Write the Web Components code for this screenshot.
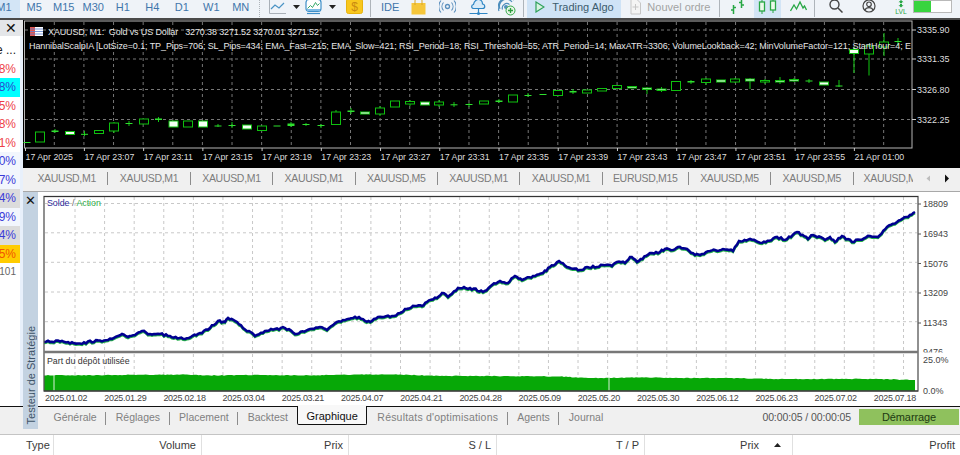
<!DOCTYPE html>
<html lang="fr">
<head>
<meta charset="utf-8">
<title>Testeur de Stratégie</title>
<style>
  html, body { margin: 0; height: 100%; overflow: hidden; background: #fff; }
  body { width: 960px; height: 455px; font-family: "Liberation Sans", Arial, sans-serif; }
  .main { display: flex; height: 414px; }
  .right { flex: 1; min-width: 0; display: flex; flex-direction: column; }
</style>
</head>
<body>
<mt-toolbar>
  <tf-button active>M1</tf-button><tf-button>M5</tf-button><tf-button>M15</tf-button><tf-button>M30</tf-button><tf-button>H1</tf-button><tf-button>H4</tf-button><tf-button>D1</tf-button><tf-button>W1</tf-button><tf-button>MN</tf-button>
  <tb-sep dashed ml="3.5" mr="8"></tb-sep>
  <tb-icon name="line" w="18" gap="7"></tb-icon><tb-icon name="caret" w="7" gap="5"></tb-icon>
  <tb-icon name="monitor" w="17" gap="7"></tb-icon><tb-icon name="caret" w="7" gap="10"></tb-icon>
  <tb-icon name="dollar" w="17" gap="5"></tb-icon>
  <tb-sep ml="2" mr="3"></tb-sep>
  <tb-label gap="7" after="12">IDE</tb-label>
  <tb-icon name="bag" w="15" gap="13"></tb-icon>
  <tb-icon name="signal" w="17" gap="13"></tb-icon>
  <tb-icon name="cloud" w="19" gap="10"></tb-icon>
  <tb-icon name="radar" w="18" gap="5"></tb-icon>
  <tb-sep ml="2" mr="3"></tb-sep>
  <algo-button>Trading Algo</algo-button>
  <tb-icon name="doc" w="11"></tb-icon>
  <tb-label gap="6" after="7" muted>Nouvel ordre</tb-label>
  <tb-sep ml="2" mr="9"></tb-sep>
  <tb-icon name="bars" w="16" gap="9"></tb-icon>
  <tb-icon name="candles" w="27" gap="9" active></tb-icon>
  <tb-icon name="zigzag" w="17" gap="5"></tb-icon>
  <tb-sep ml="2" mr="14"></tb-sep>
  <tb-icon name="search" w="14" gap="19"></tb-icon>
  <tb-icon name="user" w="14" gap="18"></tb-icon>
  <tb-icon name="lvl" w="14" gap="5"></tb-icon>
  <tb-icon name="meter" w="39"></tb-icon>
</mt-toolbar>

<div class="main">
  <market-strip>
    <watch-row>e ...</watch-row>
    <watch-row color="#ee3f48">98%</watch-row>
    <watch-row color="#2a49d0" bg="#00ffff">28%</watch-row>
    <watch-row color="#ee3f48">15%</watch-row>
    <watch-row color="#ee3f48">78%</watch-row>
    <watch-row color="#ee3f48">01%</watch-row>
    <watch-row color="#3a3ad8" bg="#f2f6fd">10%</watch-row>
    <watch-row color="#3a3ad8" bg="#f2f6fd">07%</watch-row>
    <watch-row color="#3a3ad8" bg="#dcdcdc">14%</watch-row>
    <watch-row color="#3a3ad8" bg="#f2f6fd">39%</watch-row>
    <watch-row color="#3a3ad8" bg="#dcdcdc">14%</watch-row>
    <watch-row color="#f25400" bg="#ffcc00">55%</watch-row>
    <watch-row color="#666" style="font-size:10px">101</watch-row>
  </market-strip>
  <div class="right">
    <price-chart></price-chart>
    <chart-tabs>
      <chart-tab>XAUUSD,M1</chart-tab><chart-tab>XAUUSD,M1</chart-tab><chart-tab>XAUUSD,M1</chart-tab><chart-tab>XAUUSD,M1</chart-tab><chart-tab>XAUUSD,M5</chart-tab><chart-tab>XAUUSD,M1</chart-tab><chart-tab>XAUUSD,M1</chart-tab><chart-tab w="86">EURUSD,M15</chart-tab><chart-tab>XAUUSD,M5</chart-tab><chart-tab>XAUUSD,M5</chart-tab><chart-tab last>XAUUSD,M1</chart-tab>
    </chart-tabs>
    <tester-panel>
      <equity-chart></equity-chart>
      <tester-tabs>
        <tester-tab>Générale</tester-tab>
        <tester-tab>Réglages</tester-tab>
        <tester-tab>Placement</tester-tab>
        <tester-tab plain>Backtest</tester-tab>
        <tester-tab active>Graphique</tester-tab>
        <tester-tab style="letter-spacing:.2px">Résultats d'optimisations</tester-tab>
        <tester-tab>Agents</tester-tab>
        <tester-tab plain>Journal</tester-tab>
      </tester-tabs>
    </tester-panel>
  </div>
</div>

<positions-header>
  <col-head w="54" left>Type</col-head>
  <col-head w="148">Volume</col-head>
  <col-head w="147">Prix</col-head>
  <col-head w="148">S / L</col-head>
  <col-head w="148">T / P</col-head>
  <col-head w="148" pad="33" sort>Prix</col-head>
  <col-head w="167" last>Profit</col-head>
</positions-header>

<script>
const ICONS = {
  line: `<path d="M1.5 2V15.5H18" fill="none" stroke="#a9b0b8"/><path d="M3 11l4-4 4 3 5-5" fill="none" stroke="#4a93c4" stroke-width="1.2"/>`,
  caret: `<path d="M0 7h7l-3.5 4z" fill="#222"/>`,
  monitor: `<rect x="1" y="1.5" width="15" height="12" rx="3" fill="#fff" stroke="#3f8fc8" stroke-width="1.2"/><path d="M2.5 10.5l3-3 2 2 3-5 2 3 2-2" fill="none" stroke="#35a86a"/><path d="M2 11h13v2H2z" fill="#7fbce6"/><path d="M2 15.5h13" stroke="#3f8fc8" stroke-width="1.2"/>`,
  dollar: `<rect x="0.5" y="1" width="16" height="14.5" rx="2" fill="#f8c71e" stroke="#e7b30e"/><text x="8.5" y="12.5" font-size="12" text-anchor="middle" fill="#c98a12" font-family="Liberation Sans">$</text>`,
  bag: `<path d="M0.5 5h14v11.5H0.5z" fill="#f5c63a"/><path d="M4 7V2.5C4 .5 11 .5 11 2.5V7" fill="none" stroke="#d9a526"/>`,
  signal: `<circle cx="8.5" cy="8.5" r="2" fill="none" stroke="#5b8fbd" stroke-width="1.3"/><path d="M4.5 4.5a6 6 0 0 0 0 8M12.5 4.5a6 6 0 0 1 0 8M2 2.5a9 9 0 0 0 0 12M15 2.5a9 9 0 0 1 0 12" fill="none" stroke="#5b8fbd" stroke-width="1.1"/>`,
  cloud: `<path d="M5 10.5C2 10.5 2 7 4.5 6.5 5 3 8 1 10 1.5c2.5 .5 3.5 2.5 3.5 4.5 3 .5 3 4.5 0 4.5z" fill="#d9ebf8" stroke="#2f86c4" stroke-width="1.2"/><path d="M9.5 10.5v5M.5 15.5h18" stroke="#2f86c4" stroke-width="1.2"/><circle cx="9.5" cy="15.5" r="1.5" fill="#2f86c4"/>`,
  radar: `<path d="M2 11a7 7 0 0 1 12-7M4.5 11.5a4.5 4.5 0 0 1 7-5M1 13a9.5 9.5 0 0 1 15-11" fill="none" stroke="#4f8fbd" stroke-width="1.2"/><circle cx="8" cy="9" r="2" fill="#4f8fbd"/><circle cx="12.5" cy="12.5" r="4.5" fill="#e5f5e5" stroke="#35a84a"/><path d="M12.5 10v5M10 12.5h5" stroke="#2c9c3e" stroke-width="1.3"/>`,
  doc: `<path d="M1 1.5h6l3.5 3.5v11H1z" fill="#f4f4f4" stroke="#c6c6c6"/><path d="M5.5 6v6M2.5 9h6" stroke="#c6c6c6"/>`,
  bars: `<path d="M4.5 7V16M2 12h2.5M4.5 9.5H7M12.5 2V10M10 4.5h2.5M12.5 7H15" fill="none" stroke="#28a745" stroke-width="1.5"/>`,
  candles: `<path d="M8 2V16M19 1V15" stroke="#28a745"/><rect x="5.5" y="4" width="5" height="9" fill="#eafaea" stroke="#28a745" stroke-width="1.3"/><rect x="16.5" y="3" width="5" height="9" fill="#eafaea" stroke="#28a745" stroke-width="1.3"/>`,
  zigzag: `<path d="M.5 13l3.5-6 2.5 4 3.5-7 3 6 1.5-2 2 4" fill="none" stroke="#28a745" stroke-width="1.3"/>`,
  search: `<circle cx="5.5" cy="6.5" r="4.5" fill="none" stroke="#444" stroke-width="1.4"/><path d="M9 10l4.5 4.5" stroke="#444" stroke-width="1.5"/>`,
  user: `<circle cx="7" cy="8" r="6" fill="none" stroke="#444" stroke-width="1.2"/><circle cx="7" cy="6.3" r="2.3" fill="none" stroke="#444" stroke-width="1.2"/><path d="M3 12.2c1-3.4 7-3.4 8 0" fill="none" stroke="#444" stroke-width="1.2"/>`,
  lvl: `<path d="M7 2l2.5 2.2H8V5.2H6V4.2H4.500zM7 9.500L4.500 7.300H6V6h2v1.300h1.500z" fill="#28a745"/><text x="7" y="15.8" font-size="6.8" text-anchor="middle" fill="#28a745" font-family="Liberation Sans">LVL</text>`,
  meter: `<rect x=".5" y="2.5" width="38" height="12" fill="#fff" stroke="#b9b9b9"/><rect x="1" y="3" width="17" height="11" fill="#38d43f"/>`
};

class MtToolbar extends HTMLElement {
  connectedCallback() {
    this.attachShadow({ mode: "open" }).innerHTML = `
      <style>
        :host { display: flex; align-items: flex-start; height: 20px; box-sizing: border-box; overflow: hidden;
                background: #eff3f8; border-bottom: 2px solid #4a4a4a; }
        .in { display: flex; align-items: flex-start; margin-left: -10px; height: 18px; white-space: nowrap; }
      </style>
      <div class="in"><slot></slot></div>`;
  }
}

class TfButton extends HTMLElement {
  connectedCallback() {
    this.attachShadow({ mode: "open" }).innerHTML = `
      <style>
        :host { display: block; width: 29.5px; height: 18px; line-height: 14px; text-align: center; flex: none;
                font-size: 11px; color: #3f76ab; }
        :host([active]) { background: #d3e5f6; width: 28px; padding-right: 1.5px; }
      </style><slot></slot>`;
  }
}

class TbSep extends HTMLElement {
  connectedCallback() {
    this.attachShadow({ mode: "open" }).innerHTML = `
      <style>
        :host { display: block; flex: none; width: 0; height: 17px; border-left: 1px solid #aeb4ba;
                margin: 0 ${this.getAttribute("mr")}px 0 ${this.getAttribute("ml")}px; }
        :host([dashed]) { border-left: 1px dotted #aeb4ba; }
      </style>`;
  }
}

class TbIcon extends HTMLElement {
  connectedCallback() {
    const name = this.getAttribute("name");
    const w = this.getAttribute("w");
    // icons are drawn 2px low in their box, viewBox pulls them up to the top of the bar
    this.attachShadow({ mode: "open" }).innerHTML = `
      <style>
        :host { display: flex; flex: none; height: 18px; margin-right: ${this.getAttribute("gap") || 0}px; }
        :host([active]) { background: #d3e5f6; }
        svg { display: block; }
      </style>
      <svg width="${w}" height="18" viewBox="0 2 ${w} 18">${ICONS[name]}</svg>`;
  }
}

class TbLabel extends HTMLElement {
  connectedCallback() {
    this.attachShadow({ mode: "open" }).innerHTML = `
      <style>
        :host { display: block; flex: none; font-size: 11px; line-height: 14px; color: #3f76ab;
                margin-left: ${this.getAttribute("gap") || 0}px; margin-right: ${this.getAttribute("after") || 0}px; }
        :host([muted]) { color: #a3a3a3; }
      </style><slot></slot>`;
  }
}

class AlgoButton extends HTMLElement {
  connectedCallback() {
    this.attachShadow({ mode: "open" }).innerHTML = `
      <style>
        :host { display: flex; flex: none; align-items: flex-start; gap: 7px; width: 94px; box-sizing: border-box; height: 18px;
                padding-left: 8px; background: #cfe3f6; font-size: 11px; line-height: 14px; color: #3d5d6e; margin-right: 9px; }
        svg { display: block; flex: none; margin-top: 1px; }
      </style>
      <svg width="10" height="12" viewBox="0 0 10 12"><path d="M1 1l8 5-8 5z" fill="#d6f2e0" stroke="#2ea05a" stroke-width="1.2"/></svg>
      <slot></slot>`;
  }
}

class MarketStrip extends HTMLElement {
  connectedCallback() {
    this.attachShadow({ mode: "open" }).innerHTML = `
      <style>
        :host { display: flex; flex-direction: column; flex: none; width: 23px; background: #eef1f5; overflow: hidden; }
        .head { display: flex; align-items: center; justify-content: flex-end; height: 16px; background: #e4e6e9; padding-right: 6px;
                font-size: 14px; color: #111; }
        .list { height: 370px; background: #fff; box-sizing: border-box; padding-top: 5px; border-right: 3px solid #e8f0fb; }
        .foot { flex: 1; background: #f0f0f0; border-top: 1px solid #111; }
      </style>
      <div class="head">✕</div>
      <div class="list"><slot></slot></div>
      <div class="foot"></div>`;
  }
}

class WatchRow extends HTMLElement {
  connectedCallback() {
    const bg = this.getAttribute("bg") || "transparent";
    this.attachShadow({ mode: "open" }).innerHTML = `
      <style>
        :host { display: flex; justify-content: flex-end; height: 18.5px; line-height: 18.5px; padding-right: 4px; font-size: 12px;
                background: ${bg}; color: ${this.getAttribute("color") || "#222"}; white-space: nowrap; overflow: hidden; }
        span { flex: none; }
      </style><span><slot></slot></span>`;
  }
}

// candle rows: x, top, bottom, kind (h hollow, w white, d dash), wick top, wick bottom
const CANDLES = [
  [27,142,142.5,"d"],[40,132,142,"h"],[55,130.5,132,"d",129,133],[70,131.5,134.5,"w"],[84.5,133.8,134.2,"d",131,136],
  [99,130.5,133.5,"h"],[114,123,131,"h",122,133],[129,123,124,"d",121,126],[144,119,124,"h"],[158.5,118.5,120,"d",117,122],
  [173.5,121,127,"w"],[188,121,127,"h"],[203,121,127,"w"],[218,125.5,126.5,"d",124,127],[232,125,125.4,"d",122,128],
  [247,125,129,"w"],[262,126,130.5,"h"],[277,125.5,126.5,"d"],[291,123.5,126,"d",122,127],[306,124,125,"d",123,126],
  [321,125,126,"d",124,128],[336,112,124.5,"h",110,125],[351,110.5,112,"d",108,114],[365,112,114,"w"],[380,108,114,"h",106,116],
  [395,101,107,"h"],[410,101.5,104,"h",100,106],[425,102,105,"w"],[439,102,105,"h",100,107],[454,104.3,104.7,"d",102,107],
  [469,104,105,"d",103,107],[484,101,104,"h"],[499,100.5,102,"d",99,103],[513,95,102,"h"],[528,95,96,"d",93,97],
  [543,94,95,"d"],[558,90.5,95.5,"h"],[573,91,92.5,"d",89,94],[587,90,93,"h"],[602,88.5,91,"h"],
  [617,85.5,88.5,"h"],[632,86.5,88,"w"],[647,88,89.5,"w",87,94],[661.5,89,90.5,"w",87,92],[676,81.5,90.5,"h"],
  [691,81,82.5,"d",80,84],[706,79,82.5,"h",78,85],[721,80,82,"w"],[735,79,82,"h",78,83],[750,79,81,"w",78,89],
  [765,80.5,82,"h",79,84],[780,80.5,82,"w",77,84],[794,79.5,81,"w",78,82],[809,80.5,81.5,"d",79,83],[824,82,85,"w"],
  [839,85.5,86.5,"d",80,87],[854,49.5,53.5,"w",47,73],[869,46,54,"h",44,75.5],[884,42,47,"h",33,56],[898,41,41.8,"d",38,46]
];
const SVG_FONT = `"Liberation Sans", Arial, sans-serif`;

class PriceChart extends HTMLElement {
  connectedCallback() {
    let s = "";
    // grid
    for (const y of [30, 59, 89.5, 119.5])
      s += `<path d="M25 ${y}H912" stroke="#777" stroke-dasharray="3 3"/>`;
    for (let x = 54.3; x < 912; x += 29.62)
      s += `<path d="M${x} 22V148" stroke="#777" stroke-dasharray="3 3"/>`;
    // candles
    for (const [x, t, b, kind, wt, wb] of CANDLES) {
      if (wt) s += `<path d="M${x} ${wt}V${wb}" stroke="#10c810"/>`;
      if (kind === "d") {
        s += `<rect x="${x - 3.5}" y="${t}" width="7" height="${Math.max(b - t, 1)}" fill="#2fe02f"/>`;
      } else {
        const fill = kind === "w" ? "#f4fff4" : "#000";
        s += `<rect x="${x - 4.5}" y="${t}" width="9" height="${b - t}" fill="${fill}" stroke="#0fc00f"/>`;
      }
    }
    // flag + header texts
    s += `<g><rect x="30" y="27" width="13" height="9" fill="#fff"/><path d="M30 27h5v9h-5z" fill="#e0574f"/><path d="M35 29h8M35 31.5h8M35 34h8M30 29h5M30 31.5h5M30 34h5" stroke="#5a7fd0" stroke-width=".8"/></g>`;
    s += `<text x="48" y="34.5" fill="#e6e6e6" font-size="9" xml:space="preserve" textLength="271">XAUUSD, M1:  Gold vs US Dollar   3270.38 3271.52 3270.01 3271.52</text>`;
    s += `<text x="29" y="49" fill="#e6e6e6" font-size="9" textLength="882">HannibalScalpIA [LotSize=0.1; TP_Pips=706; SL_Pips=434; EMA_Fast=215; EMA_Slow=421; RSI_Period=18; RSI_Threshold=55; ATR_Period=14; MaxATR=3306; VolumeLookback=42; MinVolumeFactor=121; StartHour=4; E</text>`;
    // right axis
    [["3335.90", 30], ["3331.35", 59], ["3326.80", 89.5], ["3322.25", 119.5]].forEach(([t, y]) => {
      s += `<path d="M912 ${y}h4" stroke="#ccc"/><text x="917" y="${y + 3.2}" fill="#ddd" font-size="9">${t}</text>`;
    });
    // time axis
    const times = ["17 Apr 2025","17 Apr 23:07","17 Apr 23:11","17 Apr 23:15","17 Apr 23:19","17 Apr 23:23","17 Apr 23:27","17 Apr 23:31","17 Apr 23:35","17 Apr 23:39","17 Apr 23:43","17 Apr 23:47","17 Apr 23:51","17 Apr 23:55","21 Apr 01:00"];
    times.forEach((t, i) => {
      const x = i ? 84.4 + (i - 1) * 59.23 : 25.5;
      s += `<path d="M${x} 148v3" stroke="#ccc"/><text x="${x}" y="160" fill="#ddd" font-size="8.8">${t}</text>`;
    });
    this.attachShadow({ mode: "open" }).innerHTML = `
      <style>
        :host { display: block; flex: none; height: 148px; background: #000; }
        svg { display: block; font-family: ${SVG_FONT}; }
      </style>
      <svg width="937" height="148" viewBox="23 20 937 148">
        <rect x="24.5" y="21" width="887.5" height="127" fill="none" stroke="#b5b5b5"/>
        ${s}
      </svg>`;
  }
}

class ChartTabs extends HTMLElement {
  connectedCallback() {
    this.attachShadow({ mode: "open" }).innerHTML = `
      <style>
        :host { display: flex; flex: none; height: 24px; box-sizing: border-box; background: #f0f0f0; border-bottom: 1px solid #a8a8a8;
                align-items: center; padding: 0 0 2px 3px; }
        .list { display: flex; width: 887px; overflow: hidden; flex: none; }
        .nav { display: flex; margin-left: 12px; gap: 11px; }
        svg { display: block; }
      </style>
      <div class="list"><slot></slot></div>
      <div class="nav">
        <svg width="7" height="9"><path d="M5 1.5v6L1.5 4.5z" fill="#bdbdbd"/></svg>
        <svg width="7" height="9"><path d="M2 .5v8L6 4.5z" fill="#111"/></svg>
      </div>`;
  }
}

class ChartTab extends HTMLElement {
  connectedCallback() {
    const w = this.getAttribute("w") || 82.4;
    this.attachShadow({ mode: "open" }).innerHTML = `
      <style>
        :host { display: block; flex: none; width: ${w}px; box-sizing: border-box; height: 13px; line-height: 13px; text-align: center;
                font-size: 10.5px; letter-spacing: -.3px; color: #7c7c7c; border-right: 1px solid #8c8c8c; white-space: nowrap; overflow: hidden; }
        :host([last]) { border-right: none; text-align: left; padding-left: 10px; }
      </style><slot></slot>`;
  }
}

class TesterPanel extends HTMLElement {
  connectedCallback() {
    this.attachShadow({ mode: "open" }).innerHTML = `
      <style>
        :host { display: flex; flex: 1; min-height: 0; background: #f0f0f0; }
        .vtab { flex: none; width: 15px; height: 237px; background: #c3d2e1; display: flex; flex-direction: column; align-items: center; }
        .x { font-size: 13px; color: #111; line-height: 18px; }
        .label { writing-mode: vertical-rl; transform: rotate(180deg); font-size: 11px; color: #3f5468; white-space: nowrap;
                 margin-top: auto; margin-bottom: 5px; }
        .col { flex: 1; min-width: 0; display: flex; flex-direction: column; }
      </style>
      <div class="vtab"><div class="x">✕</div><div class="label">Testeur de Stratégie</div></div>
      <div class="col"><slot></slot></div>`;
  }
}

// equity points, page coords, read off the reference
const EQUITY = [[44,342],[60,341.5],[78,343.5],[100,340.5],[108,340],[118,336],[122,334],[128,337],[135,335],[142,331],[150,334],[160,334],[170,336],[185,339],[200,333],[210,328],[218,321],[225,322],[228,318],[235,321],[243,328],[255,336],[265,331],[275,329],[285,328],[297,334],[310,329],[320,327],[327,330],[337,322],[343,320],[359,317],[365,321],[372,321],[378,317],[392,316],[400,313],[405,309],[415,306],[422,306],[427,302],[437,298],[442,293],[448,297],[458,288],[470,288],[483,292],[492,285],[500,281],[508,283],[515,276],[522,280],[533,276],[543,273],[550,267],[559,261],[567,267],[580,270],[587,267],[597,267],[603,265],[612,266],[617,262],[625,263],[630,257],[637,262],[650,253],[660,252],[665,249],[673,250],[678,247],[687,249],[695,255],[700,255],[710,251],[723,249],[733,251],[739,241],[750,239],[762,243],[777,237],[785,240],[797,232],[808,239],[813,235],[825,240],[830,237],[835,242],[842,236],[852,242],[870,236],[878,237],[887,227],[897,222],[910,215],[915,212]];
// top of the margin area
const MARGIN = [[44,375.5],[120,375],[185,374.5],[210,375.5],[260,375],[300,375.5],[360,374.5],[400,374.5],[440,376],[490,376],[560,376.5],[590,378],[640,377.5],[680,378],[720,378],[780,379],[840,379],[880,379],[915,380]];

function roughen(points, amp) {
  // small saw on the line so it doesn't look too clean
  const out = [];
  let seed = 7;
  for (let i = 0; i < points.length - 1; i++) {
    const [x0, y0] = points[i], [x1, y1] = points[i + 1];
    const n = Math.max(1, Math.round((x1 - x0) / 2));
    for (let k = 0; k < n; k++) {
      seed = (seed * 73 + 11) % 101;
      const t = k / n;
      out.push([x0 + (x1 - x0) * t, y0 + (y1 - y0) * t + (k ? (seed / 101 - 0.5) * amp : 0)]);
    }
  }
  out.push(points[points.length - 1]);
  return out;
}
const toD = pts => "M" + pts.map(p => p[0].toFixed(1) + " " + p[1].toFixed(1)).join("L");

class EquityChart extends HTMLElement {
  connectedCallback() {
    const grid = [];
    for (const y of [203.5, 232.8, 262.3, 292, 321.7])
      grid.push(`M45 ${y}H917`);
    for (let x = 75; x < 917; x += 29.59)
      grid.push(`M${x} 197V350M${x} 354V375`);
    const line = roughen(EQUITY, 2.2);
    const area = toD(roughen(MARGIN, .7));
    let s = "";
    [["18809", 204], ["16943", 234], ["15076", 263.5], ["13209", 293], ["11343", 323]].forEach(([t, y]) => {
      s += `<path d="M918 ${y}h3" stroke="#555"/><text x="923" y="${y + 3.2}" fill="#444" font-size="9">${t}</text>`;
    });
    ["2025.01.02","2025.01.29","2025.02.18","2025.03.04","2025.03.21","2025.04.07","2025.04.21","2025.04.28","2025.05.09","2025.05.20","2025.05.30","2025.06.12","2025.06.23","2025.07.02","2025.07.18"].forEach((t, i) => {
      s += `<text x="${45 + i * 59.2}" y="400.5" fill="#444" font-size="9" textLength="42.5">${t}</text>`;
    });
    this.attachShadow({ mode: "open" }).innerHTML = `
      <style>
        :host { display: block; flex: none; height: 214px; background: #fff; }
        svg { display: block; font-family: ${SVG_FONT}; }
      </style>
      <svg width="922" height="214" viewBox="38 192 922 214">
        <path d="${grid.join("")}" stroke="#c8c8c8" stroke-dasharray="3 3" fill="none"/>
        <path d="${toD(line.map(p => [p[0], p[1] + 1.3]))}" fill="none" stroke="#25b04a" stroke-width="2"/>
        <path d="${toD(line)}" fill="none" stroke="#000090" stroke-width="2.6"/>
        <path d="${area}L915 391H44Z" fill="#07a807"/>
        <path d="M54 375v16M609 377v14" stroke="#d8f0d8" stroke-width="1"/>
        <rect x="44" y="196.5" width="874" height="194.5" fill="none" stroke="#555" stroke-width="1.3"/>
        <path d="M44 196.5H918M44 391H918" stroke="#333"/>
        <path d="M44 352H918" stroke="#777" stroke-width="2.5"/>
        <text x="47" y="206" fill="#2a2a9a" font-size="8.8">Solde <tspan fill="#666">/</tspan> <tspan fill="#2fae4a">Action</tspan></text>
        <text x="47" y="364" fill="#333" font-size="8.8">Part du dépôt utilisée</text>
        <text x="923" y="355" fill="#444" font-size="9">9476</text>
        <rect x="920" y="352.5" width="40" height="12" fill="#fff"/>
        <text x="923" y="362.5" fill="#444" font-size="9">25.0%</text>
        <text x="923" y="394" fill="#444" font-size="9">0.0%</text>
        ${s}
      </svg>`;
  }
}

class TesterTabs extends HTMLElement {
  connectedCallback() {
    this.attachShadow({ mode: "open" }).innerHTML = `
      <style>
        :host { display: flex; flex: 1; box-sizing: border-box; border-top: 1px solid #111; padding-left: 6px; align-items: flex-start; }
        .tail { margin-left: auto; display: flex; align-items: center; gap: 8px; margin-top: 2px; margin-right: 1px;
                font-size: 10.5px; letter-spacing: -.1px; color: #555; }
        button { all: unset; width: 100px; height: 16px; line-height: 16px; text-align: center; background: #8fc15d; color: #1d3a12; font-size: 11px; }
      </style>
      <slot></slot>
      <div class="tail"><span>00:00:05 / 00:00:05</span><button>Démarrage</button></div>`;
  }
}

class TesterTab extends HTMLElement {
  connectedCallback() {
    this.attachShadow({ mode: "open" }).innerHTML = `
      <style>
        :host { display: block; flex: none; height: 17px; line-height: 19px; margin-top: 1px; padding: 0 9.5px; font-size: 10.5px; color: #808080;
                position: relative; }
        :host(:not([plain]):not([active]))::after { content: ""; position: absolute; right: 0; top: 4px; height: 13px; border-right: 1px solid #8c8c8c; }
        :host([active]) { margin: -1px 1px 0 0; height: 18px; line-height: 20px; padding: 0 8px; font-size: 11px; background: #f8f8f8; color: #111;
                          border: 1px solid #111; border-top: none; border-radius: 0 0 2px 2px; box-shadow: 0 -1px 0 #f8f8f8; }
      </style><slot></slot>`;
  }
}

class PositionsHeader extends HTMLElement {
  connectedCallback() {
    this.attachShadow({ mode: "open" }).innerHTML = `
      <style>
        :host { display: flex; height: 22px; box-sizing: border-box; background: #fff; border-top: 1px solid #c4c4c4; }
      </style><slot></slot>`;
  }
}

class ColHead extends HTMLElement {
  connectedCallback() {
    const pad = this.getAttribute("pad") || 5;
    this.attachShadow({ mode: "open" }).innerHTML = `
      <style>
        :host { display: block; flex: none; position: relative; width: ${this.getAttribute("w")}px; box-sizing: border-box; height: 21px; line-height: 21px;
                font-size: 11px; color: #3a3a3a; text-align: right; padding-right: ${pad}px; border-right: 1px solid #e0e0e0; }
        :host([left]) { text-align: left; padding-left: 26px; padding-right: 0; }
        :host([last]) { border-right: none; }
        svg { position: absolute; right: 11px; top: 8px; }
      </style>
      <slot></slot>${this.hasAttribute("sort") ? `<svg width="7" height="4"><path d="M0 4L3.5 0 7 4z" fill="#222"/></svg>` : ""}`;
  }
}

const TAGS = { "mt-toolbar": MtToolbar, "tf-button": TfButton, "tb-sep": TbSep, "tb-icon": TbIcon, "tb-label": TbLabel, "algo-button": AlgoButton,
  "market-strip": MarketStrip, "watch-row": WatchRow, "price-chart": PriceChart, "chart-tabs": ChartTabs, "chart-tab": ChartTab,
  "tester-panel": TesterPanel, "equity-chart": EquityChart, "tester-tabs": TesterTabs, "tester-tab": TesterTab,
  "positions-header": PositionsHeader, "col-head": ColHead };
for (const [name, cls] of Object.entries(TAGS)) customElements.define(name, cls);
</script>
</body>
</html>
